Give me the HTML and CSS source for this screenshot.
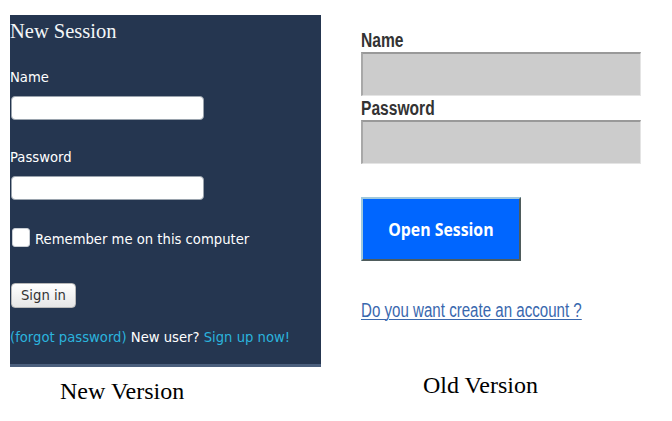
FILE: index.html
```html
<!DOCTYPE html>
<html>
<head>
<meta charset="utf-8">
<link rel="stylesheet" href="styles.css">
</head>
<body>
<div class="page">
  <div class="col-new">
    <div class="panel">
      <h1 class="title">New Session</h1>
      <label class="lbl lbl-name">Name</label>
      <input class="field" type="text">
      <label class="lbl lbl-pass">Password</label>
      <input class="field" type="password">
      <div class="remember">
        <span class="check"></span>
        <span class="remember-text">Remember me on this computer</span>
      </div>
      <button class="signin">Sign in</button>
      <p class="links"><span class="lnk">(forgot password)</span> New user? <span class="lnk">Sign up now!</span></p>
    </div>
    <div class="caption caption-new">New Version</div>
  </div>
  <div class="col-old">
    <div class="old-lbl"><span class="narrow">Name</span></div>
    <div class="old-field"></div>
    <div class="old-lbl old-lbl-pass"><span class="narrow">Password</span></div>
    <div class="old-field"></div>
    <div class="old-btn"><span class="btn-text">Open Session</span></div>
    <div class="old-link"><span class="narrow link-text">Do you want create an account ?</span></div>
    <div class="caption caption-old">Old Version</div>
  </div>
</div>
</body>
</html>
```
FILE: styles.css
```css
html, body {
  margin: 0;
  padding: 0;
  background: #ffffff;
}
.page {
  display: flex;
  width: 672px;
  height: 421px;
}
.col-new {
  padding: 15px 0 0 10px;
  width: 311px;
}
.panel {
  box-sizing: border-box;
  width: 311px;
  height: 352px;
  background: #253650;
  border-bottom: 3px solid #4b5f7d;
  display: flex;
  flex-direction: column;
  align-items: flex-start;
  font-family: "DejaVu Sans", sans-serif;
  font-size: 13.2px;
  color: #ffffff;
}
.title {
  margin: 4px 0 0 0;
  font-family: "Liberation Serif", serif;
  font-weight: normal;
  font-size: 20.5px;
  line-height: 24px;
  color: #f4f6f8;
}
.lbl {
  display: block;
  line-height: 16px;
}
.lbl-name { margin-top: 27px; }
.lbl-pass { margin-top: 30px; }
.field {
  box-sizing: border-box;
  width: 193px;
  height: 24px;
  margin: 10px 0 0 1px;
  padding: 0;
  background: #ffffff;
  border: 1px solid #9aa3ad;
  border-radius: 4px;
}
.remember {
  display: flex;
  align-items: flex-end;
  margin-top: 27px;
  margin-left: 2px;
  height: 20px;
}
.check {
  box-sizing: border-box;
  width: 18px;
  height: 19px;
  background: #ffffff;
  border: 1px solid #c9ced4;
  border-radius: 3px;
}
.remember-text {
  margin-left: 5px;
  line-height: 16px;
  position: relative;
  top: 1px;
}
.signin {
  box-sizing: border-box;
  width: 65px;
  height: 25px;
  margin: 36px 0 0 1px;
  padding: 0;
  font-family: "DejaVu Sans", sans-serif;
  font-size: 13.2px;
  color: #333333;
  background: linear-gradient(#ffffff, #e6e6e6);
  border: 1px solid #b8b8b8;
  border-radius: 4px;
}
.links {
  margin: 22px 0 0 0;
  line-height: 16px;
  color: #ffffff;
  white-space: nowrap;
}
.lnk { color: #2bb3dd; }
.caption {
  font-family: "Liberation Serif", serif;
  font-size: 24px;
  line-height: 28px;
  color: #000000;
}
.caption-new {
  margin: 10px 0 0 50px;
}
.col-old {
  margin-left: 40px;
  padding-top: 30px;
  width: 280px;
  font-family: "Liberation Sans", Arial, sans-serif;
}
.narrow {
  display: inline-block;
  transform: scaleX(0.8);
  transform-origin: left center;
}
.old-lbl {
  font-weight: bold;
  font-size: 19.5px;
  line-height: 20px;
  color: #333333;
  white-space: nowrap;
}
.old-lbl-pass { margin-top: 2px; }
.old-field {
  box-sizing: border-box;
  width: 280px;
  height: 44px;
  margin-top: 2px;
  background: #cccccc;
  border-top: 2px solid #999999;
  border-left: 2px solid #a8a8a8;
  border-bottom: 1px solid #e4e4e4;
  border-right: 1px solid #e4e4e4;
}
.old-btn {
  box-sizing: border-box;
  width: 160px;
  height: 64px;
  margin-top: 33px;
  background: #0066ff;
  border-top: 2px solid #9fc8dc;
  border-left: 2px solid #9fc8dc;
  border-right: 2px solid #4f5c5c;
  border-bottom: 2px solid #4f5c5c;
  display: flex;
  align-items: center;
  justify-content: center;
  font-family: "Open Sans", sans-serif;
  font-weight: bold;
  font-size: 18px;
  color: #ffffff;
}
.btn-text {
  display: inline-block;
  transform: scaleX(0.88);
}
.old-link {
  margin-top: 38px;
  font-size: 20px;
  line-height: 22px;
  color: #3968ae;
  white-space: nowrap;
}
.link-text {
  transform: scaleX(0.755);
  text-decoration: underline;
  text-decoration-thickness: 1px;
  text-underline-offset: 2px;
}
.caption-old {
  margin: 50px 0 0 62px;
}
```
